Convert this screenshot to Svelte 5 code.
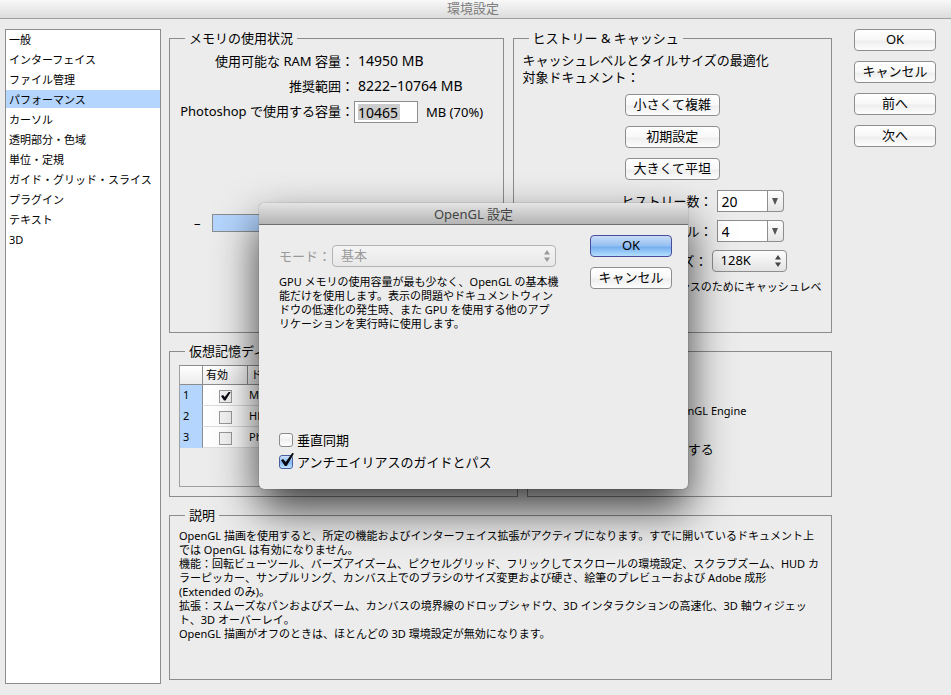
<script lang="ts">
  const categories = [
    '一般',
    'インターフェイス',
    'ファイル管理',
    'パフォーマンス',
    'カーソル',
    '透明部分・色域',
    '単位・定規',
    'ガイド・グリッド・スライス',
    'プラグイン',
    'テキスト',
    '3D',
  ];

  const description = [
    'OpenGL 描画を使用すると、所定の機能およびインターフェイス拡張がアクティブになります。すでに開いているドキュメント上',
    'では OpenGL は有効になりません。',
    '機能：回転ビューツール、バーズアイズーム、ピクセルグリッド、フリックしてスクロールの環境設定、スクラブズーム、HUD カ',
    'ラーピッカー、サンプルリング、カンバス上でのブラシのサイズ変更および硬さ、絵筆のプレビューおよび Adobe 成形',
    '(Extended のみ)。',
    '拡張：スムーズなパンおよびズーム、カンバスの境界線のドロップシャドウ、3D インタラクションの高速化、3D 軸ウィジェッ',
    'ト、3D オーバーレイ。',
    'OpenGL 描画がオフのときは、ほとんどの 3D 環境設定が無効になります。',
  ];

  const modeHelp = [
    'GPU メモリの使用容量が最も少なく、OpenGL の基本機',
    '能だけを使用します。表示の問題やドキュメントウィン',
    'ドウの低速化の発生時、また GPU を使用する他のアプ',
    'リケーションを実行時に使用します。',
  ];

  let selected = $state('パフォーマンス');
  let memory = $state('10465');
  let historyStates = $state('20');
  let cacheLevels = $state('4');
  let vsync = $state(false);
  let antialias = $state(true);
  let drives = $state([
    { name: 'Macintosh HD', active: true },
    { name: 'HD2', active: false },
    { name: 'Photo', active: false },
  ]);
</script>

{#snippet updown()}
  <svg class="updown" viewBox="0 0 6 12" aria-hidden="true">
    <path d="M3 0 L6 4.5 H0 Z M3 12 L0 7.5 H6 Z" />
  </svg>
{/snippet}

{#snippet down()}
  <svg class="down" viewBox="0 0 6 7" aria-hidden="true">
    <path d="M0 0 H6 L3 7 Z" />
  </svg>
{/snippet}

<div class="window">
  <header class="titlebar">環境設定</header>

  <div class="body">
    <ul class="categories">
      {#each categories as name}
        <li>
          <button class="category" class:active={name === selected} onclick={() => (selected = name)}>
            {name}
          </button>
        </li>
      {/each}
    </ul>

    <main class="panels">
      <div class="row">
        <fieldset class="memory">
          <legend>メモリの使用状況</legend>
          <div class="memory-grid">
            <span class="label">使用可能な RAM 容量：</span>
            <span class="value">14950 MB</span>
            <span class="label">推奨範囲：</span>
            <span class="value">8222–10764 MB</span>
            <label class="label" for="memory">Photoshop で使用する容量：</label>
            <span class="amount">
              <input id="memory" class="field highlighted" bind:value={memory} />
              MB (70%)
            </span>
          </div>
          <div class="slider">
            <span>–</span>
            <div class="slider-bar"></div>
            <span>+</span>
          </div>
        </fieldset>

        <fieldset class="history">
          <legend>ヒストリー &amp; キャッシュ</legend>
          <p class="intro">キャッシュレベルとタイルサイズの最適化<br />対象ドキュメント：</p>
          <div class="presets">
            <button class="push">小さくて複雑</button>
            <button class="push">初期設定</button>
            <button class="push">大きくて平坦</button>
          </div>
          <div class="settings">
            <div class="setting">
              <label for="history">ヒストリー数：</label>
              <span class="combo">
                <input id="history" class="field" bind:value={historyStates} />
                <button class="combo-arrow" aria-label="ヒストリー数">{@render down()}</button>
              </span>
            </div>
            <div class="setting">
              <label for="cache">キャッシュレベル：</label>
              <span class="combo">
                <input id="cache" class="field" bind:value={cacheLevels} />
                <button class="combo-arrow" aria-label="キャッシュレベル">{@render down()}</button>
              </span>
            </div>
            <div class="setting tile">
              <label for="tile">キャッシュタイルサイズ：</label>
              <span class="popup">
                <select id="tile"><option>128K</option></select>
                {@render updown()}
              </span>
            </div>
          </div>
          <p class="hint">最適な GPU パフォーマンスのためにキャッシュレベ<br />ルを 2 以上に設定します。</p>
        </fieldset>
      </div>

      <div class="row">
        <fieldset class="scratch">
          <legend>仮想記憶ディスク</legend>
          <div class="table-wrap">
            <table>
              <thead>
                <tr><th class="num"></th><th class="check">有効</th><th>ドライブ</th></tr>
              </thead>
              <tbody>
                {#each drives as drive, i}
                  <tr>
                    <td class="num">{i + 1}</td>
                    <td class="check">
                      <input type="checkbox" class="flat" aria-label={drive.name} bind:checked={drive.active} />
                    </td>
                    <td>{drive.name}</td>
                  </tr>
                {/each}
              </tbody>
            </table>
          </div>
        </fieldset>

        <fieldset class="gpu">
          <legend>GPU 設定</legend>
          <p class="card">NVIDIA GeForce GT 120 OpenGL Engine</p>
          <label class="option"><input type="checkbox" class="box" checked />OpenGL 描画を使用する</label>
        </fieldset>
      </div>

      <fieldset class="about">
        <legend>説明</legend>
        <p class="small">
          {#each description as line}
            <span>{line}</span>
          {/each}
        </p>
      </fieldset>
    </main>

    <aside class="actions">
      <button class="push">OK</button>
      <button class="push">キャンセル</button>
      <button class="push">前へ</button>
      <button class="push">次へ</button>
    </aside>
  </div>

  <div class="dialog" role="dialog" aria-labelledby="dialog-title">
    <div class="dialog-title" id="dialog-title">OpenGL 設定</div>
    <div class="dialog-body">
      <div class="dialog-main">
        <div class="mode">
          <label for="mode">モード：</label>
          <span class="popup">
            <select id="mode" disabled><option>基本</option></select>
            {@render updown()}
          </span>
        </div>
        <p class="small mode-help">
          {#each modeHelp as line}
            <span>{line}</span>
          {/each}
        </p>
        <div class="options">
          <label class="option"><input type="checkbox" class="box" bind:checked={vsync} />垂直同期</label>
          <label class="option"><input type="checkbox" class="box" bind:checked={antialias} />アンチエイリアスのガイドとパス</label>
        </div>
      </div>
      <div class="dialog-actions">
        <button class="push primary">OK</button>
        <button class="push">キャンセル</button>
      </div>
    </div>
  </div>
</div>

<style>
  :global(body) {
    margin: 0;
    background: #ececec;
  }

  .window {
    position: relative;
    min-height: 100vh;
    overflow: hidden;
    background: #ececec;
    color: #000;
    font-family: 'Noto Sans', 'Noto Sans CJK JP', sans-serif;
    font-size: 13px;
    line-height: 18px;
  }

  .window * {
    box-sizing: border-box;
  }

  button,
  input,
  select {
    margin: 0;
    font: inherit;
    color: inherit;
  }

  p {
    margin: 0;
  }

  .titlebar {
    height: 19px;
    padding-right: 5px;
    border-bottom: 1px solid #a0a0a0;
    background: linear-gradient(#f8f8f8, #dcdcdc);
    color: #7c7c7c;
    line-height: 16px;
    text-align: center;
  }

  .body {
    display: flex;
    padding: 10px 15px 10px 5px;
  }

  .categories {
    flex: 0 0 156px;
    margin: 0 8px 0 0;
    padding: 0;
    border: 1px solid #8c8c8c;
    background: #fff;
    list-style: none;
  }

  .category {
    display: block;
    width: 100%;
    height: 18px;
    margin-bottom: 2px;
    padding: 1px 3px 0;
    border: 0;
    background: none;
    font-size: 11px;
    line-height: 18px;
    text-align: left;
    white-space: nowrap;
  }

  .category.active {
    background: #b4d5fe;
  }

  .panels {
    display: flex;
    flex: 1;
    flex-direction: column;
    gap: 9px;
    min-width: 0;
    padding-bottom: 4px;
  }

  .row {
    display: flex;
    gap: 9px;
  }

  fieldset {
    min-width: 0;
    margin: 0;
    padding: 0 9px;
    border: 1px solid #8c8c8c;
  }

  legend {
    margin-left: 6px;
    padding: 0 4px;
    white-space: nowrap;
  }

  .memory {
    flex: 335 1 0;
    min-height: 304px;
  }

  .history {
    flex: 319 1 0;
  }

  .scratch {
    flex: 350 1 0;
    min-height: 155px;
  }

  .gpu {
    flex: 304 1 0;
  }

  .about {
    min-height: 174px;
    padding-top: 5px;
  }

  .memory-grid {
    display: grid;
    grid-template-columns: 175px 1fr;
    row-gap: 5px;
    padding-top: 4px;
    line-height: 20px;
    white-space: nowrap;
  }

  .label {
    text-align: right;
  }

  .value {
    padding-left: 4px;
    font-size: 14px;
  }

  .amount {
    display: flex;
    align-items: center;
    gap: 8px;
  }

  .field {
    width: 64px;
    height: 22px;
    padding: 0 4px;
    border: 1px solid #8e8e8e;
    border-radius: 0;
    outline: 0;
    background: #fff;
    font-size: 14px;
  }

  .highlighted {
    padding: 0 3px;
    background: linear-gradient(#ccc, #ccc) 3px 2px / 42px 16px no-repeat #fff;
  }

  .slider {
    display: flex;
    align-items: center;
    gap: 11px;
    margin-top: 91px;
    padding: 0 15px;
  }

  .slider-bar {
    flex: 1;
    height: 18px;
    border: 1px solid #8c8c8c;
    background: #b4d5fe;
  }

  .intro {
    padding-top: 5px;
    line-height: 17px;
    white-space: nowrap;
  }

  .presets {
    display: flex;
    flex-direction: column;
    align-items: center;
    gap: 10px;
    padding: 8px 0 10px;
  }

  .presets .push {
    width: 95px;
  }

  .push {
    width: 82px;
    height: 22px;
    padding: 0 0 2px;
    border: 1px solid #8e8e8e;
    border-radius: 4px;
    background: linear-gradient(#fff, #f8f8f8 50%, #eee 55%, #fdfdfd);
    line-height: 18px;
    white-space: nowrap;
  }

  .push.primary {
    border-color: #4a4d9c;
    background: linear-gradient(#c8dcf6, #94bff2 50%, #74adf0 55%, #b4e0fe);
  }

  .settings {
    display: flex;
    flex-direction: column;
    gap: 8px;
  }

  .setting {
    display: flex;
    align-items: center;
    gap: 4px;
  }

  .setting label {
    width: 190px;
    text-align: right;
    white-space: nowrap;
  }

  .setting.tile label {
    width: 185px;
  }

  .combo {
    display: flex;
  }

  .combo .field {
    width: 51px;
  }

  .combo-arrow {
    display: flex;
    align-items: center;
    justify-content: center;
    width: 16px;
    height: 22px;
    padding: 0;
    border: 1px solid #8e8e8e;
    border-left: 0;
    border-radius: 0 4px 4px 0;
    background: linear-gradient(#fdfdfd, #e6e6e6);
  }

  .down {
    width: 6px;
    height: 7px;
    fill: #555;
  }

  .popup {
    position: relative;
    display: block;
    height: 22px;
  }

  .popup select {
    width: 100%;
    height: 22px;
    padding: 0 20px 2px 8px;
    border: 1px solid #8e8e8e;
    border-radius: 4px;
    appearance: none;
    background: linear-gradient(#fdfdfd, #e4e4e4);
    line-height: 18px;
  }

  .tile .popup {
    width: 75px;
  }

  .updown {
    position: absolute;
    top: 5px;
    right: 6px;
    width: 6px;
    height: 12px;
    fill: #444;
    pointer-events: none;
  }

  .hint {
    padding: 8px 0 0 40px;
    font-size: 11px;
    line-height: 14px;
    white-space: nowrap;
  }

  .table-wrap {
    height: 122px;
    margin-top: 5px;
    border: 1px solid #a0a0a0;
    border-top-color: #8c8c8c;
    font-size: 11px;
  }

  table {
    width: 100%;
    border-collapse: separate;
    border-spacing: 0;
    table-layout: fixed;
  }

  th,
  td {
    padding: 0 0 0 1px;
    text-align: left;
    font-weight: normal;
  }

  th {
    height: 19px;
    padding-left: 3px;
    border-right: 1px solid #8c8c8c;
    border-bottom: 1px solid #8c8c8c;
    background: linear-gradient(#fff, #ececec);
    line-height: 18px;
  }

  td {
    height: 21px;
    border-bottom: 1px solid #ddd;
    background: #fff;
    line-height: 20px;
  }

  .num {
    width: 23px;
  }

  td.num {
    padding-left: 3px;
    border-right: 1px solid #8c8c8c;
    border-bottom-color: #b4d5fe;
    background: #b4d5fe;
  }

  .check {
    width: 45px;
  }

  td.check {
    padding: 2px 0 0;
    text-align: center;
    line-height: 0;
  }

  input[type='checkbox'] {
    position: relative;
    flex: none;
    appearance: none;
  }

  .flat {
    width: 13px;
    height: 13px;
    border: 1px solid #999;
    background: #f4f4f4;
  }

  .box {
    width: 14px;
    height: 14px;
    border: 1px solid #8a8a8a;
    border-radius: 3px;
    background: linear-gradient(#fff, #f0f0f0 50%, #fff);
  }

  .box:checked {
    border-color: #4a5f9c;
    background: linear-gradient(#cfe2fa, #86baf3 55%, #bfe6ff);
  }

  .flat:checked::after,
  .box:checked::after {
    position: absolute;
    content: '';
    background: #0a0a12;
  }

  .flat:checked::after {
    top: 1px;
    left: 1px;
    width: 10px;
    height: 9px;
    clip-path: polygon(0 50%, 20% 38%, 38% 60%, 80% 0, 100% 0, 45% 100%, 30% 100%);
  }

  .box:checked::after {
    top: -3px;
    left: 1px;
    width: 13px;
    height: 13px;
    clip-path: polygon(0 55%, 16% 46%, 36% 70%, 86% 0, 100% 4%, 44% 100%, 30% 100%);
  }

  .card {
    padding: 42px 0 0 5px;
    font-size: 11px;
    line-height: 18px;
    white-space: nowrap;
  }

  .gpu .option {
    margin: 19px 0 0 15px;
  }

  .option {
    display: flex;
    align-items: center;
    gap: 4px;
    height: 20px;
    white-space: nowrap;
  }

  .small {
    font-size: 11px;
    line-height: 14px;
  }

  .small span {
    display: block;
    white-space: nowrap;
  }

  .actions {
    display: flex;
    flex-direction: column;
    gap: 10px;
    margin-left: 22px;
  }

  .dialog {
    position: absolute;
    top: 203px;
    left: 259px;
    width: 429px;
    border-radius: 5px;
    background: #ececec;
    box-shadow:
      0 0 1px rgba(0, 0, 0, 0.7),
      0 20px 44px rgba(0, 0, 0, 0.75);
  }

  .dialog-title {
    height: 22px;
    border-bottom: 1px solid #6e6e6e;
    border-radius: 5px 5px 0 0;
    background: linear-gradient(#e4e4e4, #b4b4b4);
    color: #444;
    line-height: 22px;
    text-align: center;
  }

  .dialog-body {
    display: flex;
    gap: 34px;
    padding: 10px 16px 17px 20px;
  }

  .dialog-main {
    flex: 1;
    min-width: 0;
    padding-top: 10px;
  }

  .dialog-actions {
    display: flex;
    flex-direction: column;
    gap: 10px;
  }

  .mode {
    display: flex;
    align-items: center;
    gap: 1px;
    color: #9a9a9a;
  }

  .mode .popup {
    flex: 1;
  }

  .mode select {
    border-color: #b4b4b4;
    background: linear-gradient(#f4f4f4, #e8e8e8);
    opacity: 1;
  }

  .mode .updown {
    fill: #999;
  }

  .mode-help {
    margin-top: 8px;
  }

  .options {
    display: flex;
    flex-direction: column;
    gap: 2px;
    margin-top: 99px;
  }
</style>
